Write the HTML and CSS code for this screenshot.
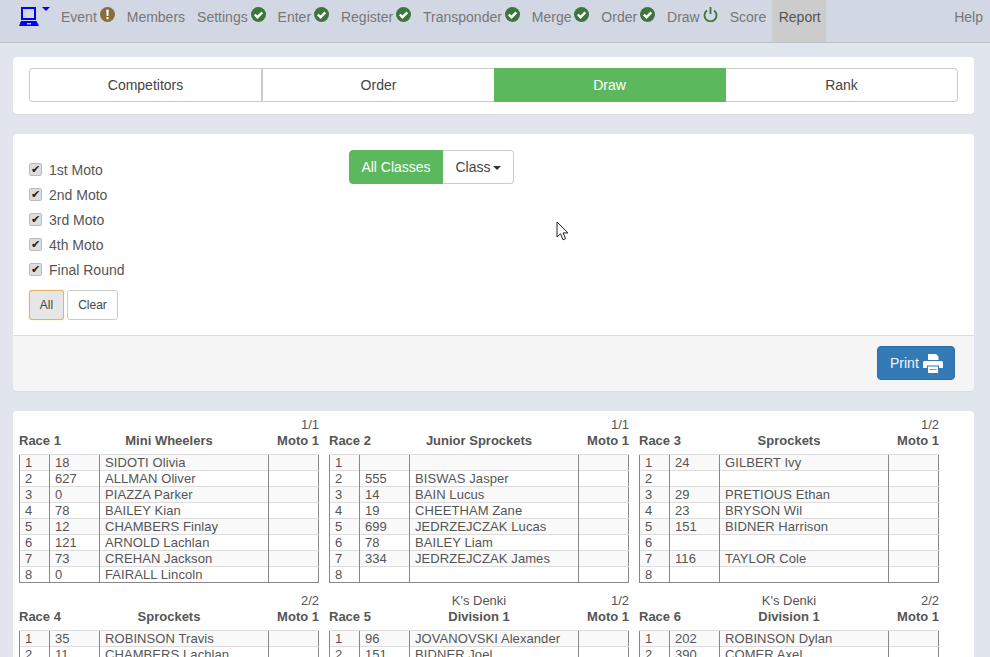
FILE: index.html
```html
<!DOCTYPE html>
<html lang="en">
<head>
  <meta charset="UTF-8" />
  <title>Draw</title>
  <link rel="stylesheet" href="styles.css">
</head>
<body>
  <nav class="navbar">
    <a class="brand">
      <svg width="20" height="19" viewBox="0 0 20 19"><path fill="#00f" fill-rule="evenodd" d="M2 0h15v13H2zM4 2v9h11V2zM2 14h15.500L20 19H0zM8 16v1.500h4V16z"/></svg>
      <span class="brand-caret"></span>
    </a>
    <a class="nav-link">Event<svg class="nav-icon" viewBox="0 0 15 15"><circle cx="7.500" cy="7.500" r="7.500" fill="#8a6d3b"/><path fill="#fff" d="M6.200 2.800h2.600L8.400 9H6.600zM6.500 10h2v2.200h-2z"/></svg></a>
    <a class="nav-link">Members</a>
    <a class="nav-link">Settings<svg class="nav-icon" viewBox="0 0 15 15"><circle cx="7.500" cy="7.500" r="7.500" fill="#3c763d"/><path fill="none" stroke="#fff" stroke-width="2.400" d="M3.800 7.500l2.700 2.700 4.800-4.800"/></svg></a>
    <a class="nav-link">Enter<svg class="nav-icon" viewBox="0 0 15 15"><circle cx="7.500" cy="7.500" r="7.500" fill="#3c763d"/><path fill="none" stroke="#fff" stroke-width="2.400" d="M3.800 7.500l2.700 2.700 4.800-4.800"/></svg></a>
    <a class="nav-link">Register<svg class="nav-icon" viewBox="0 0 15 15"><circle cx="7.500" cy="7.500" r="7.500" fill="#3c763d"/><path fill="none" stroke="#fff" stroke-width="2.400" d="M3.800 7.500l2.700 2.700 4.800-4.800"/></svg></a>
    <a class="nav-link">Transponder<svg class="nav-icon" viewBox="0 0 15 15"><circle cx="7.500" cy="7.500" r="7.500" fill="#3c763d"/><path fill="none" stroke="#fff" stroke-width="2.400" d="M3.800 7.500l2.700 2.700 4.800-4.800"/></svg></a>
    <a class="nav-link">Merge<svg class="nav-icon" viewBox="0 0 15 15"><circle cx="7.500" cy="7.500" r="7.500" fill="#3c763d"/><path fill="none" stroke="#fff" stroke-width="2.400" d="M3.800 7.500l2.700 2.700 4.800-4.800"/></svg></a>
    <a class="nav-link">Order<svg class="nav-icon" viewBox="0 0 15 15"><circle cx="7.500" cy="7.500" r="7.500" fill="#3c763d"/><path fill="none" stroke="#fff" stroke-width="2.400" d="M3.800 7.500l2.700 2.700 4.800-4.800"/></svg></a>
    <a class="nav-link">Draw<svg class="nav-icon" viewBox="0 0 15 15"><path fill="none" stroke="#3c763d" stroke-width="1.800" d="M4 3.500a6 6 0 1 0 7 0M7.500 0v7"/></svg></a>
    <a class="nav-link">Score</a>
    <a class="nav-link active">Report</a>
    <a class="nav-link help">Help</a>
  </nav>

  <main class="page">
    <section class="card tabs-card">
      <div class="tabs">
        <button class="tab">Competitors</button>
        <button class="tab">Order</button>
        <button class="tab tab-on">Draw</button>
        <button class="tab">Rank</button>
      </div>
    </section>

    <section class="card filter-card">
      <div class="filter-body">
        <div class="motos">
          <label class="moto"><input type="checkbox" checked />1st Moto</label>
          <label class="moto"><input type="checkbox" checked />2nd Moto</label>
          <label class="moto"><input type="checkbox" checked />3rd Moto</label>
          <label class="moto"><input type="checkbox" checked />4th Moto</label>
          <label class="moto"><input type="checkbox" checked />Final Round</label>
          <div class="moto-btns">
            <button class="btn-sm btn-focus">All</button>
            <button class="btn-sm">Clear</button>
          </div>
        </div>
        <div class="class-group">
          <button class="class-btn class-all">All Classes</button>
          <button class="class-btn class-pick">Class<span class="caret"></span></button>
        </div>
      </div>
      <div class="filter-foot">
        <button class="print-btn">Print
          <svg width="20" height="19" viewBox="0 0 20 19"><path fill="#fff" fill-rule="evenodd" d="M5 0h8l2.500 2.500V6H5zM1.500 7h17c.8 0 1.500.7 1.500 1.500V14h-4v-2.500H4V14H0V8.500C0 7.700.7 7 1.500 7zM5 12.500h10V19H5zM6.500 15v.8h7V15z"/></svg>
        </button>
      </div>
    </section>

    <section class="card races">
      <div class="race">
        <div class="race-head"><span></span><span></span><span class="r">1/1</span><b>Race 1</b><b class="c">Mini Wheelers</b><b class="r">Moto 1</b></div>
        <table>
          <tr><td>1</td><td>18</td><td>SIDOTI Olivia</td><td></td></tr>
          <tr><td>2</td><td>627</td><td>ALLMAN Oliver</td><td></td></tr>
          <tr><td>3</td><td>0</td><td>PIAZZA Parker</td><td></td></tr>
          <tr><td>4</td><td>78</td><td>BAILEY Kian</td><td></td></tr>
          <tr><td>5</td><td>12</td><td>CHAMBERS Finlay</td><td></td></tr>
          <tr><td>6</td><td>121</td><td>ARNOLD Lachlan</td><td></td></tr>
          <tr><td>7</td><td>73</td><td>CREHAN Jackson</td><td></td></tr>
          <tr><td>8</td><td>0</td><td>FAIRALL Lincoln</td><td></td></tr>
        </table>
      </div>
      <div class="race">
        <div class="race-head"><span></span><span></span><span class="r">1/1</span><b>Race 2</b><b class="c">Junior Sprockets</b><b class="r">Moto 1</b></div>
        <table>
          <tr><td>1</td><td></td><td></td><td></td></tr>
          <tr><td>2</td><td>555</td><td>BISWAS Jasper</td><td></td></tr>
          <tr><td>3</td><td>14</td><td>BAIN Lucus</td><td></td></tr>
          <tr><td>4</td><td>19</td><td>CHEETHAM Zane</td><td></td></tr>
          <tr><td>5</td><td>699</td><td>JEDRZEJCZAK Lucas</td><td></td></tr>
          <tr><td>6</td><td>78</td><td>BAILEY Liam</td><td></td></tr>
          <tr><td>7</td><td>334</td><td>JEDRZEJCZAK James</td><td></td></tr>
          <tr><td>8</td><td></td><td></td><td></td></tr>
        </table>
      </div>
      <div class="race">
        <div class="race-head"><span></span><span></span><span class="r">1/2</span><b>Race 3</b><b class="c">Sprockets</b><b class="r">Moto 1</b></div>
        <table>
          <tr><td>1</td><td>24</td><td>GILBERT Ivy</td><td></td></tr>
          <tr><td>2</td><td></td><td></td><td></td></tr>
          <tr><td>3</td><td>29</td><td>PRETIOUS Ethan</td><td></td></tr>
          <tr><td>4</td><td>23</td><td>BRYSON Wil</td><td></td></tr>
          <tr><td>5</td><td>151</td><td>BIDNER Harrison</td><td></td></tr>
          <tr><td>6</td><td></td><td></td><td></td></tr>
          <tr><td>7</td><td>116</td><td>TAYLOR Cole</td><td></td></tr>
          <tr><td>8</td><td></td><td></td><td></td></tr>
        </table>
      </div>
      <div class="race">
        <div class="race-head"><span></span><span></span><span class="r">2/2</span><b>Race 4</b><b class="c">Sprockets</b><b class="r">Moto 1</b></div>
        <table>
          <tr><td>1</td><td>35</td><td>ROBINSON Travis</td><td></td></tr>
          <tr><td>2</td><td>11</td><td>CHAMBERS Lachlan</td><td></td></tr>
        </table>
      </div>
      <div class="race">
        <div class="race-head"><span></span><span class="c">K's Denki</span><span class="r">1/2</span><b>Race 5</b><b class="c">Division 1</b><b class="r">Moto 1</b></div>
        <table>
          <tr><td>1</td><td>96</td><td>JOVANOVSKI Alexander</td><td></td></tr>
          <tr><td>2</td><td>151</td><td>BIDNER Joel</td><td></td></tr>
        </table>
      </div>
      <div class="race">
        <div class="race-head"><span></span><span class="c">K's Denki</span><span class="r">2/2</span><b>Race 6</b><b class="c">Division 1</b><b class="r">Moto 1</b></div>
        <table>
          <tr><td>1</td><td>202</td><td>ROBINSON Dylan</td><td></td></tr>
          <tr><td>2</td><td>390</td><td>COMER Axel</td><td></td></tr>
        </table>
      </div>
    </section>
  </main>

  <svg class="mouse" width="14" height="21" viewBox="0 0 14 21"><path fill="#fff" stroke="#222" stroke-width="1" d="M1 1v15l3.500-3.200 2.500 6 2.600-1.100-2.500-5.800h4.900z"/></svg>
</body>
</html>
```

FILE: styles.css
```css
html, body {
  height: 100%;
  overflow: hidden;
}
body {
  font-family: "Liberation Sans", sans-serif;
  font-size: 14px;
  color: #333;
  background: #e1e5ee;
  margin: 0;
  position: relative;
}
button {
  font-family: inherit;
  font-size: 14px;
  cursor: pointer;
}

/* top bar */
.navbar {
  display: flex;
  height: 42px;
  background: #d1d8e3;
  border-bottom: 1px solid #bdc1c9;
}
.brand {
  display: flex;
  align-items: flex-start;
  width: 36px;
  padding: 7px 0 0 19px;
}
.brand-caret {
  width: 0;
  height: 0;
  margin: 0 0 0 2.500px;
  border-top: 4px solid #00f;
  border-left: 4px solid transparent;
  border-right: 4px solid transparent;
}
.nav-link {
  display: flex;
  align-items: flex-start;
  padding: 9px 6px 0;
  line-height: 16px;
  color: #777;
}
.nav-link.active {
  background: #ccc;
  color: #555;
  padding: 9px 5.500px 0 6.500px;
}
.nav-link.help {
  margin-left: auto;
  margin-right: 1px;
}
.nav-icon {
  width: 15px;
  height: 15px;
  margin: -2px 0 0 2.920px;
}

/* cards */
.page {
  padding: 14px 16px 0 13px;
}
.card {
  background: #fff;
  border-radius: 4px;
  box-shadow: 0 1px 1px rgba(0,0,0,0.05);
  margin-bottom: 20px;
}
.tabs-card {
  padding: 11px 16px 12px;
}
.tabs {
  display: flex;
  height: 34px;
}
.tab {
  flex: 1;
  background: #fff;
  color: #444;
  border: 1px solid #ccc;
  border-left-width: 0;
  padding: 0;
}
.tab:first-child {
  border-left-width: 1px;
  border-radius: 4px 0 0 4px;
  border-right-width: 2px;
}
.tab:last-child {
  border-radius: 0 4px 4px 0;
}
.tab-on {
  margin-left: -1px;
  background: #5cb85c;
  border-color: #5cb85c;
  color: #fff;
}

.filter-body {
  display: flex;
  height: 201px;
  box-sizing: border-box;
}
.motos {
  width: 320px;
  box-sizing: border-box;
  padding: 23px 0 0 16px;
}
.moto {
  display: flex;
  align-items: center;
  height: 25px;
  color: #555;
}
.moto input {
  appearance: none;
  box-sizing: border-box;
  width: 13px;
  height: 13px;
  margin: 0 7px 0 0;
  background: #ddd;
  border: 1px solid #bbb;
  border-radius: 2px;
  text-align: center;
  color: #222;
  font: 11px/11px "DejaVu Sans", sans-serif;
}
.moto input::before {
  content: "✔";
}
.moto-btns {
  display: flex;
  gap: 3px;
  margin-top: 8px;
}
.btn-sm {
  height: 30px;
  padding: 0 10px;
  width: 51px;
  font-size: 12px;
  color: #444;
  background: #fff;
  border: 1px solid #ccc;
  border-radius: 3px;
}
.btn-focus {
  width: 35px;
  padding: 0;
  background: #e6e6e6;
  border-color: #e0b566;
  box-shadow: 0 0 1px #e0b566;
}
.class-group {
  display: flex;
  height: 34px;
  margin: 16px 0 0 16px;
}
.class-btn {
  padding: 0;
  border: 1px solid #ccc;
  background: #fff;
  color: #444;
}
.class-all {
  width: 94px;
  background: #5cb85c;
  border-color: #5cb85c;
  color: #fff;
  border-radius: 4px 0 0 4px;
}
.class-pick {
  width: 71px;
  border-left: 0;
  border-radius: 0 4px 4px 0;
}
.caret {
  display: inline-block;
  margin-left: 2px;
  vertical-align: middle;
  border-top: 4px solid #333;
  border-left: 4px solid transparent;
  border-right: 4px solid transparent;
}
.filter-foot {
  display: flex;
  justify-content: flex-end;
  background: #f5f5f5;
  border-top: 1px solid #ddd;
  border-radius: 0 0 4px 4px;
  padding: 10px 19px 11px 0;
}
.print-btn {
  display: flex;
  align-items: center;
  justify-content: space-between;
  box-sizing: border-box;
  width: 78px;
  height: 34px;
  padding: 0 11px 0 12px;
  background: #337ab7;
  color: #f2f6fa;
  border: 1px solid #2e6da4;
  border-radius: 4px;
}

/* race sheets */
.races {
  display: grid;
  grid-template-columns: 300px 300px 300px;
  column-gap: 10px;
  row-gap: 10px;
  align-items: start;
  padding: 6px 0 0 6px;
}
.race-head {
  display: grid;
  grid-template-columns: 90px 1fr 90px;
  grid-auto-rows: 16px;
  margin-bottom: 5px;
  font-size: 13px;
  line-height: 16px;
  color: #555;
}
.c {
  text-align: center;
}
.r {
  text-align: right;
}
table {
  width: 300px;
  table-layout: fixed;
  border-collapse: collapse;
  border: 1px solid #888;
  font-size: 13px;
  letter-spacing: 0.08px;
  color: #555;
}
td {
  height: 15px;
  padding: 0 0 0 5px;
  line-height: 15px;
  border-top: 1px solid #ddd;
  border-left: 1px solid #888;
  white-space: nowrap;
}
td:nth-child(1) {
  width: 30px;
  box-sizing: border-box;
}
td:nth-child(2) {
  width: 50px;
  box-sizing: border-box;
}
td:nth-child(4) {
  width: 50px;
  box-sizing: border-box;
}
tr:nth-child(odd) {
  background: #f9f9f9;
}

/* pointer caught in the shot */
.mouse {
  position: absolute;
  left: 556px;
  top: 221px;
}
```
